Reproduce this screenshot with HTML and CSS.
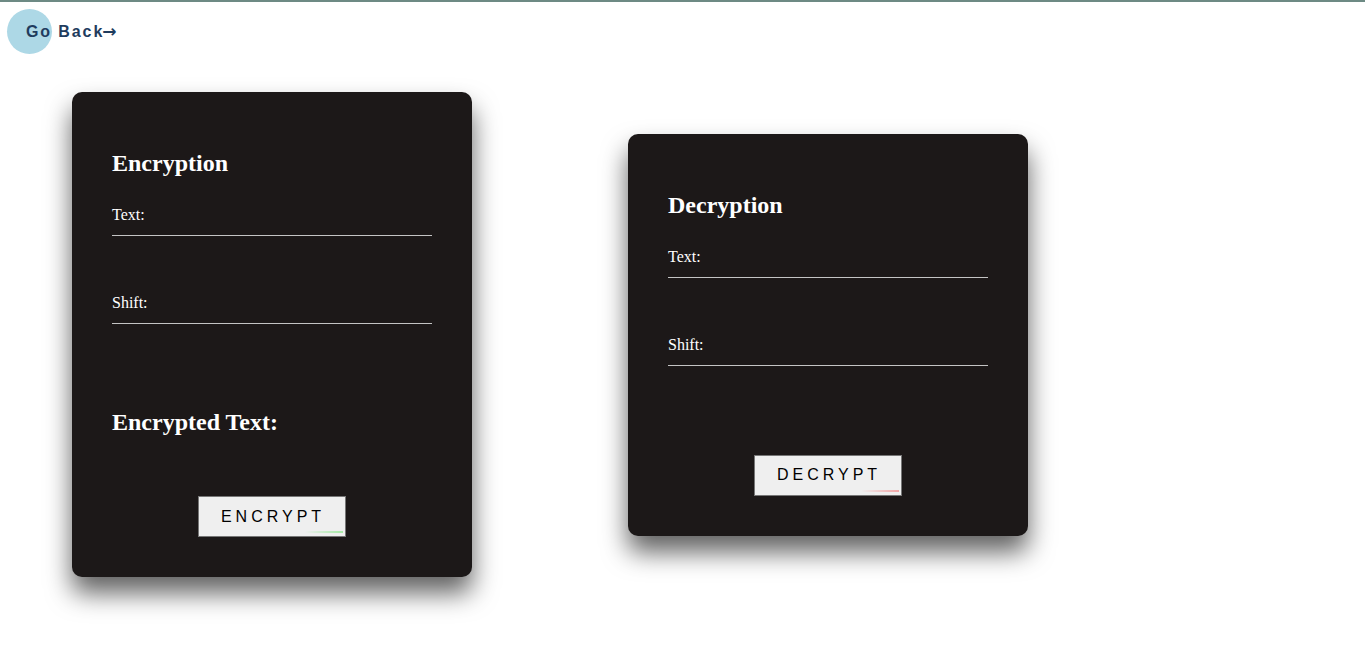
FILE: index.html
```html
<!DOCTYPE html>
<html lang="en">
<head>
<meta charset="utf-8">
<title>Caesar Cipher</title>
<link rel="stylesheet" href="styles.css">
</head>
<body>
<header class="top">
  <a class="back" href="#">Go Back<span class="arrow">&#8594;</span></a>
</header>
<main class="stage">
  <section class="card">
    <h2 class="title">Encryption</h2>
    <div class="field">
      <label class="field-label">Text:</label>
    </div>
    <div class="field">
      <label class="field-label">Shift:</label>
    </div>
    <h2 class="result">Encrypted Text:</h2>
    <div class="actions">
      <button class="btn btn-enc" type="button">ENCRYPT<span class="glow"></span></button>
    </div>
  </section>
  <section class="card card-dec">
    <h2 class="title">Decryption</h2>
    <div class="field">
      <label class="field-label">Text:</label>
    </div>
    <div class="field">
      <label class="field-label">Shift:</label>
    </div>
    <div class="actions actions-dec">
      <button class="btn btn-dec" type="button">DECRYPT<span class="glow"></span></button>
    </div>
  </section>
</main>
</body>
</html>
```

FILE: styles.css
```css
html, body {
  margin: 0;
  padding: 0;
  background: #ffffff;
}

body {
  border-top: 2px solid #6d8a84;
  font-family: "Liberation Serif", "Times New Roman", serif;
  min-height: 100vh;
  box-sizing: border-box;
}

.top {
  height: 60px;
  box-sizing: border-box;
  padding: 19.5px 0 0 26px;
}

.back {
  position: relative;
  display: inline-block;
  font-family: "Liberation Sans", Arial, sans-serif;
  font-weight: bold;
  font-size: 16px;
  line-height: 18px;
  letter-spacing: 1.9px;
  color: #1f3c5e;
  text-decoration: none;
  z-index: 0;
}

.arrow {
  font-family: "Noto Sans", "DejaVu Sans", sans-serif;
  font-weight: 800;
  font-size: 17px;
  letter-spacing: 0;
  margin-left: -2px;
}

.back::before {
  content: "";
  position: absolute;
  left: -19px;
  top: -12.5px;
  width: 45px;
  height: 45px;
  border-radius: 50%;
  background: #add8e6;
  z-index: -1;
}

.stage {
  height: 545px;
  display: flex;
  align-items: center;
  gap: 156px;
  padding-left: 72px;
  padding-bottom: 61px;
}

.card {
  width: 400px;
  box-sizing: border-box;
  padding: 40px;
  background: #1c1818;
  border-radius: 10px;
  box-shadow: 0 16px 26px rgba(0, 0, 0, 0.62);
  color: #ffffff;
}

.title {
  margin: 17px 0 0;
  font-size: 24px;
  line-height: 28px;
  font-weight: bold;
}

.field {
  margin-top: 29px;
  padding-bottom: 11px;
  border-bottom: 1px solid #c4c4c4;
}

.field + .field {
  margin-top: 58px;
}

.field-label {
  display: block;
  font-size: 16px;
  line-height: 18px;
  color: #ffffff;
}

.result {
  margin: 84px 0 0;
  font-size: 24px;
  line-height: 28px;
  font-weight: bold;
}

.actions {
  display: flex;
  justify-content: center;
  margin-top: 60px;
}

.actions-dec {
  margin-top: 89px;
}

.btn {
  position: relative;
  width: 148px;
  height: 41px;
  box-sizing: border-box;
  padding: 0 0 0 2px;
  border: 1px solid #767676;
  background: #efefef;
  color: #000000;
  font-family: "Liberation Sans", Arial, sans-serif;
  font-size: 16px;
  letter-spacing: 4px;
  text-align: center;
  cursor: pointer;
}

.glow {
  position: absolute;
  right: 2px;
  bottom: 3px;
  width: 38px;
  height: 2px;
}

.btn-enc .glow {
  background: linear-gradient(to right, rgba(126, 224, 126, 0), #a6eaa6);
}

.btn-dec .glow {
  background: linear-gradient(to right, rgba(240, 140, 140, 0), #f2a6a6);
}
```
